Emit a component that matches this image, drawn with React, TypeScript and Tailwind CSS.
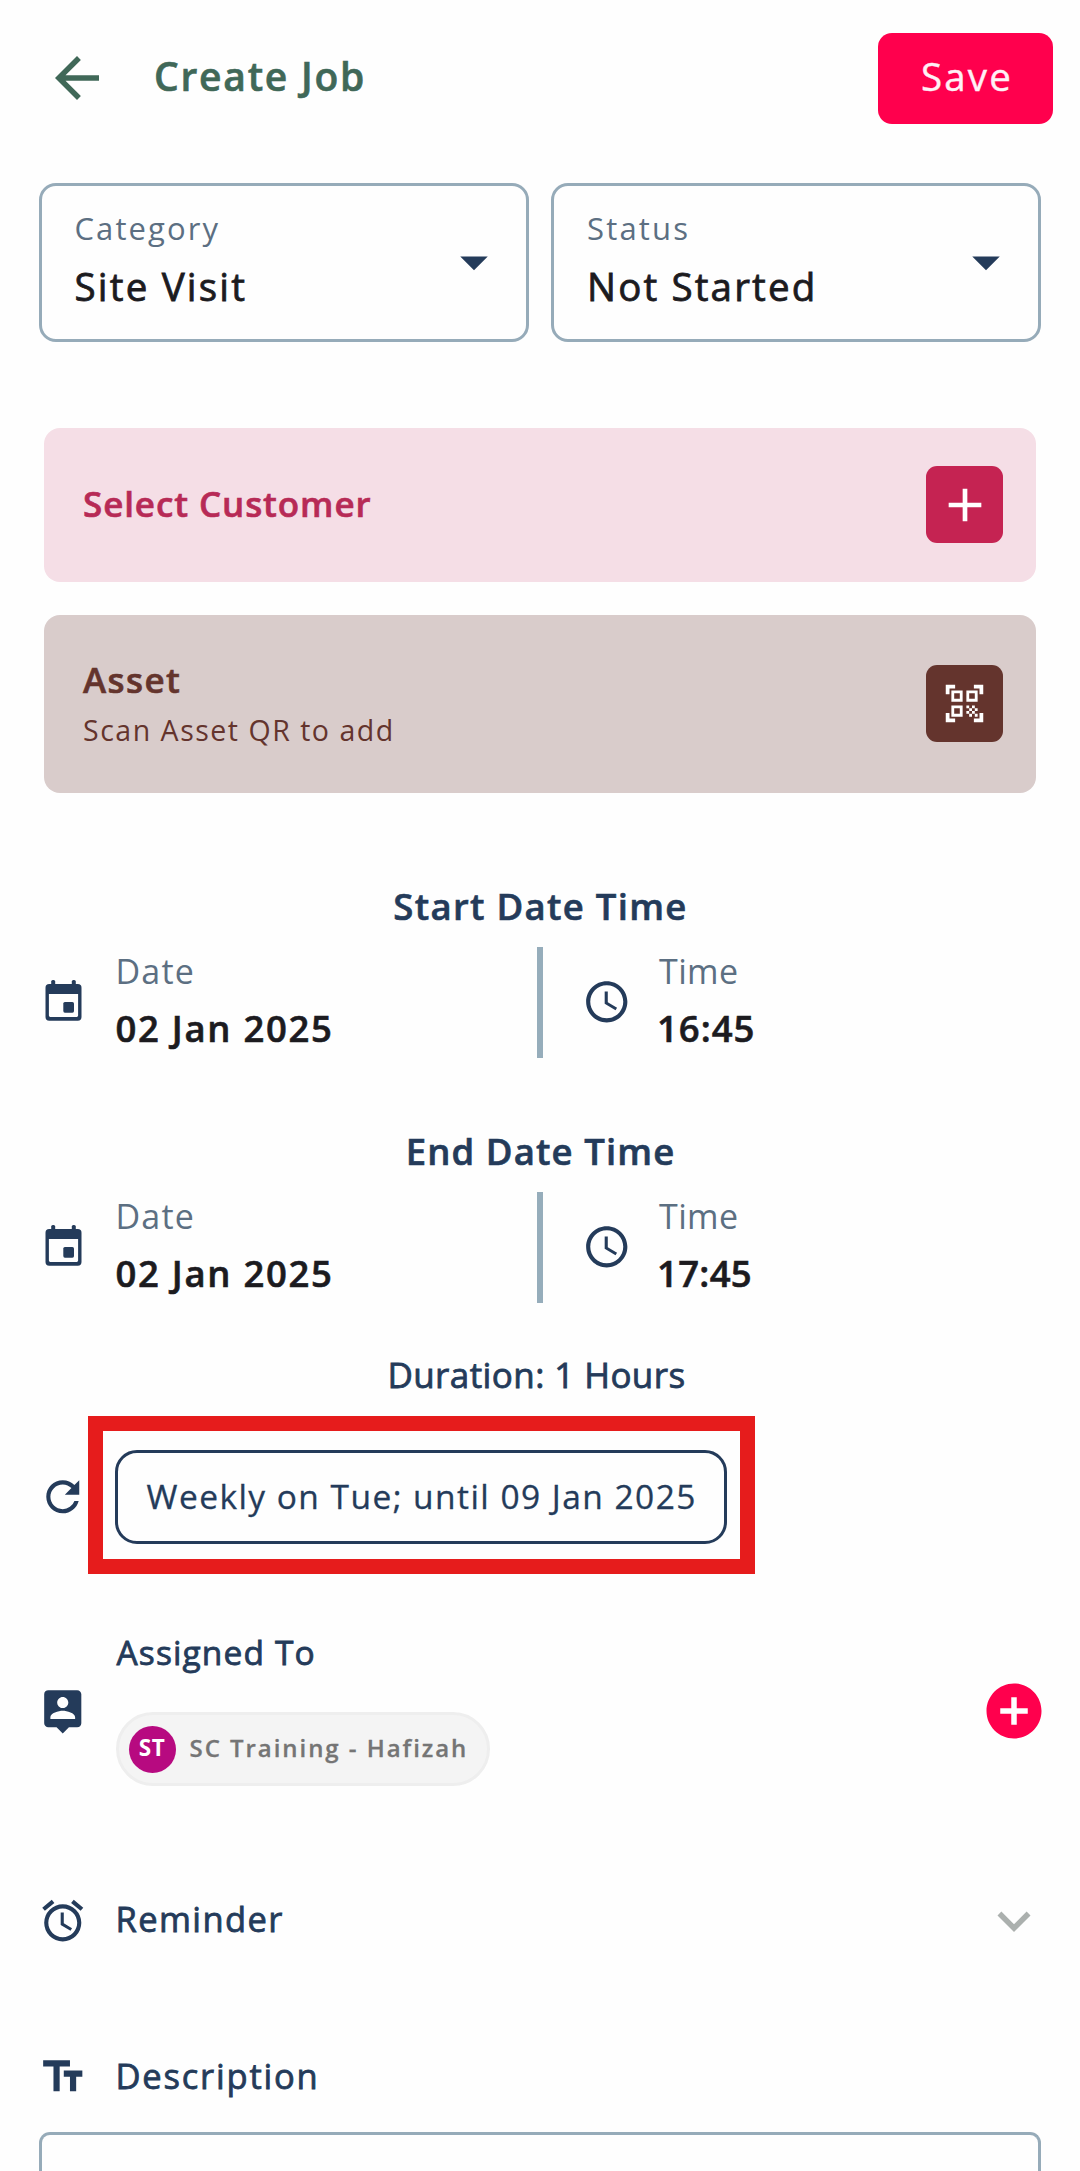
import React from "react";
import {
  MdAdd,
  MdAddCircle,
  MdArrowBack,
  MdArrowDropDown,
  MdExpandMore,
  MdOutlineAlarm,
  MdQrCodeScanner,
  MdRefresh,
  MdSchedule,
  MdTextFields,
} from "react-icons/md";

const MEDIUM = "[-webkit-text-stroke:0.8px]";
const HEAVY = "font-semibold [-webkit-text-stroke:0.6px]";

function SelectField({
  label,
  value,
  labelClass,
  valueClass,
}: {
  label: string;
  value: string;
  labelClass: string;
  valueClass: string;
}) {
  return (
    <div className="flex h-[159px] w-[490px] items-start justify-between rounded-[17px] border-[3px] border-[#96abb9] pl-[33px] pr-[19px]">
      <div className="flex flex-col pt-[20px]">
        <span className={`h-[44px] text-[31px] leading-[44px] text-[#5c6f82] ${labelClass}`}>{label}</span>
        <span className={`mt-[10px] h-[52px] text-[38.5px] leading-[52px] text-[#1c1b1f] ${MEDIUM} ${valueClass}`}>
          {value}
        </span>
      </div>
      <MdArrowDropDown className="mt-[42.5px] size-[66px] text-[#243b5a]" />
    </div>
  );
}

function CalendarIcon() {
  return (
    <svg width="38" height="42" viewBox="0 0 38 42" fill="#243b5a">
      <rect x="6.2" y="0" width="4" height="8" rx="1.6" />
      <rect x="26.8" y="0" width="4" height="8" rx="1.6" />
      <path
        fillRule="evenodd"
        d="M4.200 4h28.600a3.700 3.700 0 0 1 3.700 3.700V37a3.700 3.700 0 0 1-3.700 3.700H4.200A3.700 3.700 0 0 1 .5 37V7.700A3.700 3.700 0 0 1 4.200 4zM3.900 14v21.500a1.400 1.400 0 0 0 1.400 1.400h26.400a1.400 1.400 0 0 0 1.400-1.400V14z"
      />
      <rect x="18.300" y="22" width="10.700" height="10.700" rx="1.600" />
    </svg>
  );
}

function PersonBadgeIcon() {
  return (
    <svg className="size-[49.5px]" viewBox="0 0 24 24" fill="currentColor">
      <path d="M19 2H5a2 2 0 0 0-2 2v14a2 2 0 0 0 2 2h4l3 3 3-3h4c1.100 0 2-.9 2-2V4c0-1.100-.9-2-2-2zm-7 3.300c1.490 0 2.700 1.210 2.700 2.700s-1.210 2.700-2.700 2.700S9.300 9.490 9.300 8s1.210-2.700 2.700-2.700zM18 16H6v-.9c0-2 4-3.100 6-3.100s6 1.100 6 3.100v.9z" />
    </svg>
  );
}

function DateTimeRow({ date, time, timeClass }: { date: string; time: string; timeClass: string }) {
  return (
    <div className="mt-[15px] flex h-[111px]">
      <div className="flex w-[537px] pl-[44.5px]">
        <div className="mt-[33px] w-[38px]">
          <CalendarIcon />
        </div>
        <div className="ml-[33px] flex flex-col pt-[3.5px]">
          <span className="h-[40px] text-[34px] leading-[40px] tracking-[1.2px] text-[#5c6f82]">Date</span>
          <span
            className={`mt-[13px] h-[48px] text-[36.5px] leading-[48px] tracking-[1.7px] text-[#1c1b1f] ${HEAVY}`}
          >
            {date}
          </span>
        </div>
      </div>
      <div className="w-[6px] bg-[#96adbb]" />
      <div className="flex pl-[38.5px]">
        <MdSchedule className="mt-[30px] size-[49.5px] text-[#243b5a]" />
        <div className="ml-[28px] flex flex-col pt-[3.5px]">
          <span className="h-[40px] text-[34px] leading-[40px] tracking-[0.4px] text-[#5c6f82]">Time</span>
          <span
            className={`-ml-[2px] mt-[13px] h-[48px] text-[36.5px] leading-[48px] text-[#1c1b1f] ${HEAVY} ${timeClass}`}
          >
            {time}
          </span>
        </div>
      </div>
    </div>
  );
}

export default function App() {
  return (
    <div className="flex h-[2171px] w-[1080px] flex-col overflow-hidden whitespace-nowrap bg-[#fefefe] font-['Open_Sans',sans-serif] text-[#243b5a]">
      <header className="flex h-[156px] shrink-0 items-center pl-[44px] pr-[27px]">
        <MdArrowBack className="size-[66px] text-[#406858]" />
        <h1 className={`ml-[44px] pb-[5px] text-[39px] leading-[50px] tracking-[1.76px] text-[#406858] ${HEAVY}`}>
          Create Job
        </h1>
        <button className="ml-auto flex h-[91px] w-[175px] items-center justify-center rounded-[14px] bg-[#ff004d] pb-[4px] pl-[3px] text-[38.5px] leading-[50px] tracking-[2.2px] text-[#fff0f6] [-webkit-text-stroke:0.4px]">
          Save
        </button>
      </header>

      <div className="mt-[27px] flex shrink-0 justify-between pl-[38.5px] pr-[39px]">
        <SelectField label="Category" value="Site Visit" labelClass="tracking-[2.09px]" valueClass="tracking-[2.2px]" />
        <SelectField label="Status" value="Not Started" labelClass="tracking-[2.2px]" valueClass="tracking-[2.15px]" />
      </div>

      <div className="mx-[44px] mt-[86px] flex h-[154px] shrink-0 items-center justify-between rounded-[16px] bg-[#f5dee6] pl-[39px] pr-[33px]">
        <span className={`mb-[3px] text-[35px] leading-[44px] tracking-[0.9px] text-[#b72a56] ${HEAVY}`}>
          Select Customer
        </span>
        <button className="mb-[1px] flex size-[77px] items-center justify-center rounded-[11px] bg-[#c52352] text-white">
          <MdAdd className="size-[56px]" />
        </button>
      </div>

      <div className="mx-[44px] mt-[33px] flex h-[178px] shrink-0 items-center justify-between rounded-[16px] bg-[#d9cccb] pl-[39px] pr-[33px]">
        <div className="flex flex-col pb-[2px]">
          <span className={`text-[35px] leading-[44px] tracking-[1.4px] text-[#64342d] ${HEAVY}`}>Asset</span>
          <span className="mt-[10px] text-[28.5px] leading-[36px] tracking-[1.52px] text-[#64342d]">
            Scan Asset QR to add
          </span>
        </div>
        <button className="mb-[1px] flex size-[77px] items-center justify-center rounded-[11px] bg-[#64342d] text-white">
          <MdQrCodeScanner className="size-[45px]" />
        </button>
      </div>

      <section className="mt-[88px] h-[245px] shrink-0">
        <h2 className={`pl-[1px] text-center text-[36.5px] leading-[51px] tracking-[1.3px] ${HEAVY}`}>
          Start Date Time
        </h2>
        <DateTimeRow date="02 Jan 2025" time="16:45" timeClass="tracking-[1px]" />
      </section>
      <section className="h-[177px] shrink-0">
        <h2 className={`pl-[1px] text-center text-[36.5px] leading-[51px] tracking-[1.1px] ${HEAVY}`}>
          End Date Time
        </h2>
        <DateTimeRow date="02 Jan 2025" time="17:45" timeClass="tracking-[0.3px]" />
      </section>

      <div className={`mt-[47px] shrink-0 pr-[7px] text-center text-[35px] leading-[50px] tracking-[0.41px] ${MEDIUM}`}>
        Duration: 1 Hours
      </div>

      <div className="mt-[16px] flex h-[158px] shrink-0 pl-[38px]">
        <MdRefresh className="mt-[56px] size-[49.5px] shrink-0" />
        <div className="flex w-[667px] items-center justify-center border-[15px] border-[#e61c1c] pt-[4px]">
          <div className="flex h-[94px] w-[612px] items-center rounded-[22px] border-[3px] border-[#243b5a] pb-[2px] pl-[28.5px] text-[33.5px] leading-[44px] tracking-[1.45px] [-webkit-text-stroke:0.3px]">
            Weekly on Tue; until 09 Jan 2025
          </div>
        </div>
      </div>

      <section className="mt-[53px] flex h-[167px] shrink-0 items-center pl-[38px] pr-[33px]">
        <PersonBadgeIcon />
        <div className="ml-[28px] flex h-full flex-col items-start">
          <span className={`ml-[1px] text-[33.5px] leading-[50px] tracking-[1.12px] ${MEDIUM}`}>Assigned To</span>
          <div className="mt-[35px] flex h-[74px] w-[374px] items-center rounded-full border-[3px] border-[#eeeeee] bg-[#f4f4f4] pl-[10px]">
            <span className="flex size-[47px] items-center justify-center rounded-full bg-[#b70a80] pb-[3px] text-[22.5px] font-bold leading-[30px] tracking-[0.5px] text-white">
              ST
            </span>
            <span className="ml-[14px] pb-[3px] text-[24px] font-semibold leading-[34px] tracking-[1.95px] text-[#757575] [-webkit-text-stroke:0.3px]">
              SC Training - Hafizah
            </span>
          </div>
        </div>
        <MdAddCircle className="ml-auto size-[66px] text-[#ff004d]" />
      </section>

      <section className="mt-[87px] flex h-[80px] shrink-0 items-center pl-[38px] pr-[33px]">
        <MdOutlineAlarm className="size-[49.5px]" />
        <span className={`ml-[28px] pb-[4px] text-[34.5px] leading-[50px] tracking-[1.4px] ${MEDIUM}`}>Reminder</span>
        <MdExpandMore className="ml-auto size-[66px] text-[#abb0ae]" />
      </section>

      <section className="mt-[86px] flex h-[60px] shrink-0 items-center pl-[38px]">
        <MdTextFields className="size-[49.5px]" />
        <span className={`ml-[28px] pb-[2px] text-[34.5px] leading-[50px] tracking-[1.8px] ${MEDIUM}`}>Description</span>
      </section>

      <div className="ml-[38.5px] mr-[39px] mt-[25px] flex-1 rounded-t-[11px] border-[3px] border-b-0 border-[#96abb9]" />
    </div>
  );
}
